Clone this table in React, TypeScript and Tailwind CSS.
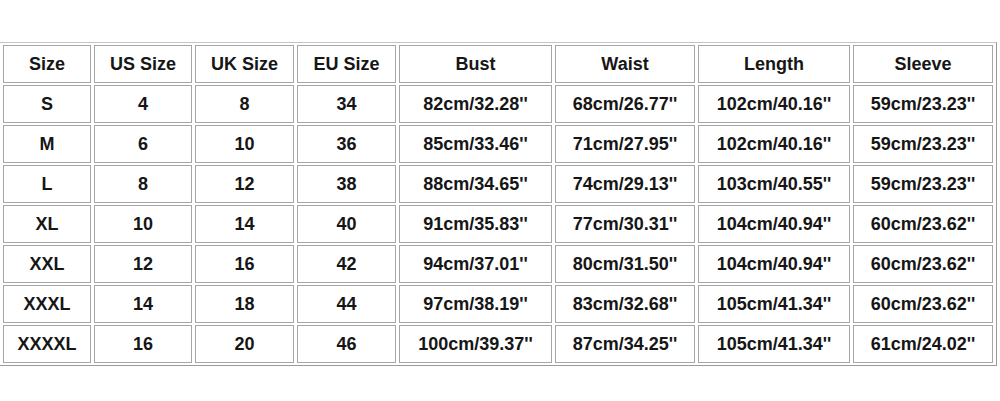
const headers = ['Size', 'US Size', 'UK Size', 'EU Size', 'Bust', 'Waist', 'Length', 'Sleeve'];

const widths = ['w-[88px]', 'w-[98px]', 'w-[99px]', 'w-[99px]', 'w-[153px]', 'w-[140px]', 'w-[152px]', 'w-[140px]'];

const rows = [
  ['S', '4', '8', '34', "82cm/32.28''", "68cm/26.77''", "102cm/40.16''", "59cm/23.23''"],
  ['M', '6', '10', '36', "85cm/33.46''", "71cm/27.95''", "102cm/40.16''", "59cm/23.23''"],
  ['L', '8', '12', '38', "88cm/34.65''", "74cm/29.13''", "103cm/40.55''", "59cm/23.23''"],
  ['XL', '10', '14', '40', "91cm/35.83''", "77cm/30.31''", "104cm/40.94''", "60cm/23.62''"],
  ['XXL', '12', '16', '42', "94cm/37.01''", "80cm/31.50''", "104cm/40.94''", "60cm/23.62''"],
  ['XXXL', '14', '18', '44', "97cm/38.19''", "83cm/32.68''", "105cm/41.34''", "60cm/23.62''"],
  ['XXXXL', '16', '20', '46', "100cm/39.37''", "87cm/34.25''", "105cm/41.34''", "61cm/24.02''"],
];

export default function App() {
  return (
    <div className="w-[1000px] h-[401px] bg-white pt-[42px] font-['Liberation_Sans',Arial,sans-serif]">
      {/* size chart */}
      <table className="ml-[-1px] border-separate border-spacing-x-[3px] border-spacing-y-[2px] border border-t-[#c4c4c4] border-l-[#c4c4c4] border-r-[#9a9a9a] border-b-[#9a9a9a] table-fixed">
        <thead>
          <tr>
            {headers.map((h, i) => (
              <th
                key={h}
                className={`${widths[i]} h-[38px] p-0 border border-[#a6a6a6] text-center align-middle text-[18px] font-bold text-[#161616]`}
              >
                {h}
              </th>
            ))}
          </tr>
        </thead>
        <tbody>
          {rows.map((row, r) => (
            <tr key={r}>
              {row.map((cell, i) => (
                <td
                  key={i}
                  className={`${widths[i]} h-[38px] p-0 border border-[#a6a6a6] text-center align-middle text-[18px] font-bold text-[#161616]`}
                >
                  {cell}
                </td>
              ))}
            </tr>
          ))}
        </tbody>
      </table>
    </div>
  );
}
